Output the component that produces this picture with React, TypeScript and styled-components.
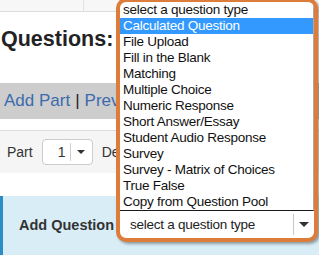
import React from 'react';
import styled, { createGlobalStyle } from 'styled-components';

const GlobalStyle = createGlobalStyle`
  html, body {
    margin: 0;
    padding: 0;
    background: #fff;
  }
  body {
    font-family: "Liberation Sans", Arial, sans-serif;
  }
`;

const questionTypes = [
  'select a question type',
  'Calculated Question',
  'File Upload',
  'Fill in the Blank',
  'Matching',
  'Multiple Choice',
  'Numeric Response',
  'Short Answer/Essay',
  'Student Audio Response',
  'Survey',
  'Survey - Matrix of Choices',
  'True False',
  'Copy from Question Pool',
];

function App() {
  return (
    <>
      <GlobalStyle />
      <Page>
        <TopBar>
          <TopCell />
        </TopBar>
        <Heading>Questions:</Heading>
        <ToolBar>
          <ToolLink>Add Part</ToolLink>
          <Pipe>|</Pipe>
          <ToolLink>Prev</ToolLink>
        </ToolBar>
        <PartRow>
          <Label>Part</Label>
          <SmallSelect>
            <SmallValue>1</SmallValue>
            <SmallArrow>
              <Caret $size={4} />
            </SmallArrow>
          </SmallSelect>
          <Label>De</Label>
        </PartRow>
        <AddPanel>
          <PanelTitle>Add Question</PanelTitle>
        </AddPanel>

        <Callout>
          <ListBox>
            {questionTypes.map((t, i) => (
              <Option key={t} $selected={i === 1}>
                {t}
              </Option>
            ))}
          </ListBox>
          <SelectControl>
            <SelectText>select a question type</SelectText>
            <SelectArrow>
              <Caret $size={5} />
            </SelectArrow>
          </SelectControl>
        </Callout>
      </Page>
    </>
  );
}

export default App;

const Page = styled.div`
  position: relative;
  width: 319px;
  height: 255px;
  overflow: hidden;
  display: flex;
  flex-direction: column;
  background: #fff;
`;

const TopBar = styled.div`
  height: 11px;
  flex-shrink: 0;
  display: flex;
  background: #f7f7f7;
  border-bottom: 1px solid #dddddd;
`;

const TopCell = styled.div`
  width: 83px;
  border-right: 1px solid #e2e2e2;
`;

const Heading = styled.h1`
  margin: 0;
  height: 71px;
  flex-shrink: 0;
  box-sizing: border-box;
  padding: 15px 0 0 1px;
  font-size: 21.5px;
  line-height: 24px;
  font-weight: bold;
  color: #222;
`;

const ToolBar = styled.div`
  height: 36px;
  flex-shrink: 0;
  display: flex;
  align-items: center;
  padding-left: 4px;
  background: #cdcdcd;
  font-size: 17px;
  white-space: nowrap;
`;

const ToolLink = styled.a`
  color: #3c6aad;
  text-decoration: none;
`;

const Pipe = styled.span`
  color: #222;
  margin: 0 5px;
`;

const PartRow = styled.div`
  margin-top: 11px;
  height: 42px;
  flex-shrink: 0;
  display: flex;
  align-items: center;
  gap: 9px;
  padding-left: 7px;
  background: #f5f5f5;
  border-top: 1px solid #dddddd;
  white-space: nowrap;
`;

const Label = styled.span`
  font-size: 14px;
  color: #333;
  & + & {
    margin-left: -4px;
  }
`;

const SmallSelect = styled.div`
  width: 51px;
  height: 26px;
  box-sizing: border-box;
  display: flex;
  align-items: center;
  background: #fff;
  border: 1px solid #cccccc;
  border-radius: 4px;
`;

const SmallValue = styled.span`
  width: 28px;
  padding-left: 15px;
  box-sizing: border-box;
  font-size: 14px;
  color: #333;
  border-right: 1px solid #cfcfcf;
  line-height: 18px;
`;

const SmallArrow = styled.div`
  flex: 1;
  display: flex;
  justify-content: center;
`;

const Caret = styled.span<{ $size: number }>`
  width: 0;
  height: 0;
  border-left: ${(p) => p.$size}px solid transparent;
  border-right: ${(p) => p.$size}px solid transparent;
  border-top: ${(p) => p.$size}px solid #333;
`;

const AddPanel = styled.div`
  margin-top: 23px;
  flex: 1;
  display: flex;
  align-items: flex-start;
  padding: 21px 0 0 16px;
  background: #d9edf7;
  border-left: 3px solid #2b8dc4;
`;

const PanelTitle = styled.span`
  font-size: 14.5px;
  font-weight: bold;
  color: #333;
  white-space: nowrap;
`;

const Callout = styled.div`
  position: absolute;
  left: 116px;
  top: -2px;
  width: 202px;
  height: 244px;
  box-sizing: border-box;
  display: flex;
  flex-direction: column;
  background: #fff;
  border: 4px solid #dd7d3b;
  border-radius: 10px;
  box-shadow: 2px 2px 3px rgba(0, 0, 0, 0.35);
  overflow: hidden;
`;

const ListBox = styled.div`
  display: flex;
  flex-direction: column;
  border-right: 1px solid #a8a8a8;
  border-bottom: 1px solid #1a1a1a;
`;

const Option = styled.div<{ $selected?: boolean }>`
  height: 16px;
  line-height: 16px;
  padding-left: 3px;
  font-size: 13.5px;
  letter-spacing: -0.25px;
  white-space: nowrap;
  color: ${(p) => (p.$selected ? '#fff' : '#111')};
  background: ${(p) => (p.$selected ? '#3399ff' : 'transparent')};
`;

const SelectControl = styled.div`
  flex: 1;
  display: flex;
  align-items: center;
  padding-left: 10px;
`;

const SelectText = styled.span`
  flex: 1;
  font-size: 13.5px;
  letter-spacing: -0.25px;
  color: #222;
  white-space: nowrap;
`;

const SelectArrow = styled.div`
  width: 20px;
  height: 21px;
  display: flex;
  align-items: center;
  justify-content: center;
  border-left: 1px solid #c8c8c8;
`;
